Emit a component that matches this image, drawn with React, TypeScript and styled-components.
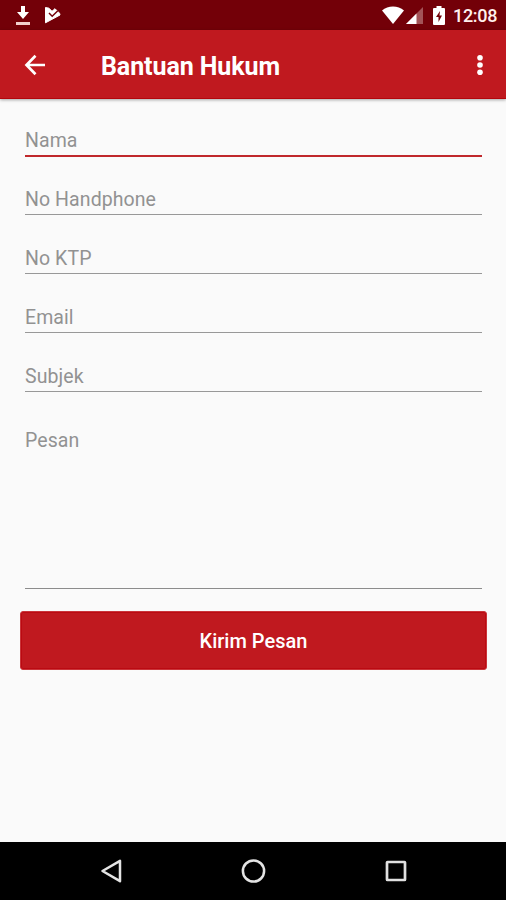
import React from "react";
import styled, { createGlobalStyle } from "styled-components";

const GlobalStyle = createGlobalStyle`
  * { box-sizing: border-box; }
  body { margin: 0; background: #fafafa; font-family: Roboto, sans-serif; }
`;

const Screen = styled.div`
  display: flex;
  flex-direction: column;
  width: 506px;
  height: 900px;
  overflow: hidden;
  background: #fafafa;
`;

const StatusBar = styled.div`
  display: flex;
  align-items: center;
  justify-content: space-between;
  flex: none;
  height: 30px;
  padding: 0 9px 0 14px;
  background: #730008;
`;

const StatusGroup = styled.div`
  display: flex;
  align-items: center;
`;

const Clock = styled.span`
  width: 44px;
  margin-left: 8px;
  padding-top: 2px;
  color: #fff0ee;
  font-size: 18px;
  font-weight: 500;
  line-height: 28px;
  letter-spacing: -0.3px;
  white-space: nowrap;
`;

const AppBar = styled.header`
  display: flex;
  align-items: center;
  flex: none;
  height: 69px;
  padding: 1px 15px 0 20px;
  background: #c0191f;
  border-bottom: 1px solid #b3060c;
  box-shadow: 0 1px 3px rgba(0, 0, 0, 0.35);
`;

const IconButton = styled.button`
  display: flex;
  padding: 0;
  border: 0;
  background: none;
`;

const Title = styled.h1`
  flex: 1;
  margin: 0 0 0 51px;
  padding-top: 4px;
  color: #fff;
  font-size: 25px;
  font-weight: 700;
  line-height: 32px;
  letter-spacing: -0.08px;
`;

const Form = styled.form`
  display: flex;
  flex-direction: column;
  flex: 1;
  padding: 0 20px;
`;

const Field = styled.label<{ $active?: boolean }>`
  display: flex;
  align-items: flex-end;
  height: 59px;
  margin: 0 4px 0 5px;
  padding-bottom: 1px;
  border-bottom: ${(p) => (p.$active ? "2px solid #c0282c" : "1px solid #989898")};

  &:first-child { height: 58px; }
  &:nth-child(2) { height: 58px; }
`;

const MessageField = styled(Field)`
  align-items: flex-start;
  height: 197px;
  padding: 36px 0 0;
  border-bottom-color: #8c8c8c;
`;

const Hint = styled.span`
  color: #929292;
  font-size: 19.5px;
  line-height: 26px;
  letter-spacing: 0.08px;
`;

const Submit = styled.button`
  flex: none;
  height: 59px;
  margin: 22px -1px 0 0;
  padding: 1px 0 0;
  border: 1px solid #c9353a;
  border-radius: 3px;
  background: #c0191f;
  box-shadow: inset 0 0 0 1px #bb0a12;
  color: #fff;
  font-family: inherit;
  font-size: 20px;
  font-weight: 500;
`;

const NavBar = styled.nav`
  display: flex;
  align-items: center;
  justify-content: space-between;
  flex: none;
  height: 58px;
  padding: 0 97px 0 99px;
  background: #000;
`;

const fields = ["Nama", "No Handphone", "No KTP", "Email", "Subjek"];

const DownloadIcon = () => (
  <svg width="18" height="20" viewBox="0 0 18 20" fill="#fff">
    <path d="M7 1h4v6h4l-6 7-6-7h4z" />
    <path d="M2 17h14v3H2z" fill="#f1cfcd" />
  </svg>
);

const CheckFlagIcon = () => (
  <svg width="18" height="18" viewBox="0 0 18 18">
    <path d="M1.500 1.500 5 2.200 8 5.300l3-2.600 4.500 4.500.5 1.800L1.500 16.800z" fill="#fff" stroke="#fff" strokeLinejoin="round" />
    <path d="m5 7 3.200 3.200 5.600-5.400" fill="none" stroke="#730008" strokeWidth="1.500" />
  </svg>
);

const WifiIcon = () => (
  <svg width="22" height="18" viewBox="0 0 22 18">
    <path d="M0 4.4C6-.9 16-.9 22 4.4L11 18z" fill="#fff" />
  </svg>
);

const SignalIcon = () => (
  <svg width="18" height="17" viewBox="0 0 18 17">
    <path d="M17 0v17H0z" fill="#a35357" />
    <path d="M10.500 6.500V17H0z" fill="#fff" />
  </svg>
);

const BatteryIcon = () => (
  <svg width="12" height="19" viewBox="0 0 12 19">
    <path d="M3.5 0h5v2H11q1 0 1 1v15q0 1-1 1H1q-1 0-1-1V3q0-1 1-1h2.500z" fill="#fff" />
    <path d="M7 5 3 11h2.500v5L9 9.500H6.500z" fill="#730008" />
  </svg>
);

const StatusIcons = styled.div`
  display: flex;
  align-items: center;
  & > svg:nth-child(2) { margin: 0 9px 0 2px; }
`;

const Notifications = styled(StatusGroup)`
  gap: 12px;
`;

export default function App() {
  return (
    <Screen>
      <GlobalStyle />
      <StatusBar>
        <Notifications>
          <DownloadIcon />
          <CheckFlagIcon />
        </Notifications>
        <StatusGroup>
          <StatusIcons>
            <WifiIcon />
            <SignalIcon />
            <BatteryIcon />
          </StatusIcons>
          <Clock>12:08</Clock>
        </StatusGroup>
      </StatusBar>
      <AppBar>
        <IconButton type="button" aria-label="Kembali">
          <svg width="30" height="30" viewBox="0 0 30 30" fill="none" stroke="#fff" strokeWidth="2.700">
            <path d="M25 15H7M15.500 5.800 6.500 15l9 9.200" />
          </svg>
        </IconButton>
        <Title>Bantuan Hukum</Title>
        <IconButton type="button" aria-label="Menu">
          <svg width="22" height="24" viewBox="0 0 22 24" fill="#fff">
            <circle cx="11" cy="4.800" r="2.800" />
            <circle cx="11" cy="12" r="2.800" />
            <circle cx="11" cy="19.200" r="2.800" />
          </svg>
        </IconButton>
      </AppBar>
      <Form>
        {fields.map((name, i) => (
          <Field key={name} $active={i === 0}>
            <Hint>{name}</Hint>
          </Field>
        ))}
        <MessageField>
          <Hint>Pesan</Hint>
        </MessageField>
        <Submit type="button">Kirim Pesan</Submit>
      </Form>
      <NavBar>
        <svg width="24" height="26" viewBox="0 0 24 26" fill="none" stroke="#e4e4e4" strokeWidth="2.500">
          <path d="M21 2.800v20.400L3.500 13z" strokeLinejoin="round" />
        </svg>
        <svg width="26" height="26" viewBox="0 0 26 26" fill="none" stroke="#e4e4e4" strokeWidth="2.500">
          <circle cx="13.500" cy="13" r="10.600" />
        </svg>
        <svg width="26" height="26" viewBox="0 0 26 26" fill="none" stroke="#e0e0e0" strokeWidth="2.700">
          <rect x="4" y="4" width="18" height="18" rx="0.500" />
        </svg>
      </NavBar>
    </Screen>
  );
}
